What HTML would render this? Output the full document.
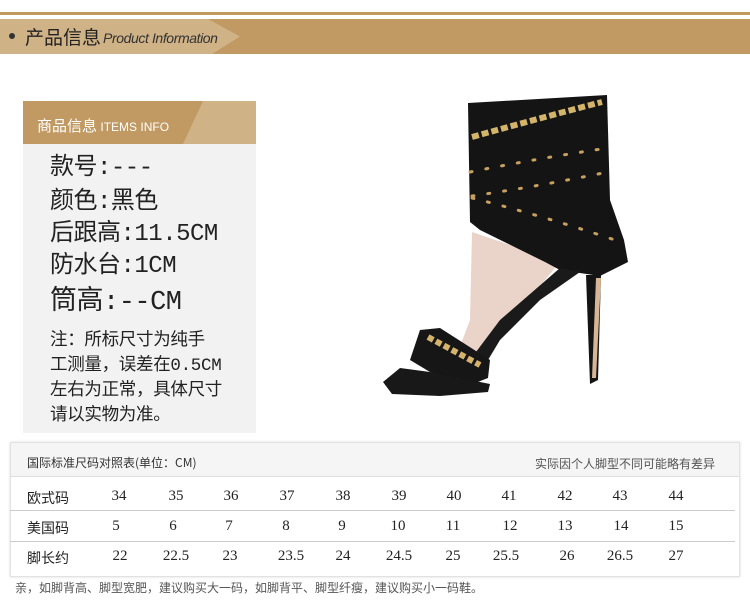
<!DOCTYPE html>
<html><head><meta charset="utf-8"><style>
*{margin:0;padding:0;box-sizing:border-box}
body{width:750px;height:604px;background:#fff;position:relative;overflow:hidden;font-family:"Liberation Sans","Noto Sans CJK SC",sans-serif;color:#222}
.a{position:absolute}
.cn{font-family:"Noto Sans CJK SC",sans-serif}
.big{font-family:"Liberation Mono","Noto Sans CJK SC",monospace;font-size:24px;color:#222;left:50px;line-height:32px;letter-spacing:-0.5px}
.row{position:absolute;left:0;width:740px;font-family:'Liberation Serif','Noto Sans CJK SC',serif;font-size:15px;color:#222}
.row span{position:absolute;width:50px;margin-left:-25px;text-align:center}
.row .l{left:27px;margin-left:0;text-align:left;font-family:"Noto Sans CJK SC",sans-serif;font-size:14px}
</style></head><body>
<div class="a" style="left:0;top:12px;width:750px;height:3px;background:#c09a5f"></div>
<div class="a" style="left:0;top:19px;width:750px;height:35px;background:#c09a62"></div>
<svg class="a" style="left:0;top:19px" width="250" height="35"><polygon points="0,0 208,0 240,17.5 212,35 0,35" fill="#cfb286"/></svg>
<div class="a" style="left:9px;top:33px;width:6px;height:6px;border-radius:3px;background:#333"></div>
<div class="a cn" style="left:25px;top:24px;font-size:19px;line-height:26px;color:#222">产品信息</div>
<div class="a" style="left:103px;top:30px;font-size:14px;font-style:italic;color:#333;letter-spacing:-0.4px">Product Information</div>

<div class="a" style="left:23px;top:101px;width:233px;height:332px;background:#f2f2f2"></div>
<div class="a" style="left:23px;top:101px;width:233px;height:43px;background:#c09a62"></div>
<svg class="a" style="left:23px;top:101px" width="233" height="43"><polygon points="180,0 233,0 233,43 160,43" fill="#cfb286"/></svg>
<div class="a cn" style="left:37px;top:116px;font-size:15px;color:#fff;line-height:20px">商品信息 <span style="font-family:'Liberation Sans';font-size:12px">ITEMS INFO</span></div>
<div class="a big" style="top:153px">款号:---</div>
<div class="a big" style="top:187px">颜色:黑色</div>
<div class="a big" style="top:219px">后跟高:11.5CM</div>
<div class="a big" style="top:251px">防水台:1CM</div>
<div class="a big" style="top:287px;font-size:27px">筒高:--CM</div>
<div class="a" style="left:50px;top:329px;font-family:'Liberation Mono','Noto Sans CJK SC',monospace;font-size:17.5px;line-height:25px;width:205px;color:#222;letter-spacing:-0.3px">注：所标尺寸为纯手<br>工测量，误差在0.5CM<br>左右为正常，具体尺寸<br>请以实物为准。</div>

<svg class="a" style="left:0;top:0" width="750" height="440">
<path d="M472,232 L560,262 L545,280 L500,330 L478,362 L452,368 L470,320 Z" fill="#ead3c8"/>
<path d="M468,103 L607,95 L610,200 L624,240 L628,262 L600,276 L560,270 L545,262 L480,230 L470,222 Z" fill="#141414"/>
<path d="M586,275 L601,275 L598,380 L590,384 Z" fill="#141414"/>
<path d="M596,278 L601,278 L596,378 L592,378 Z" fill="#d8b594"/>
<path d="M560,268 L580,272 L540,300 L500,340 L488,360 L478,366 L470,360 L500,320 Z" fill="#1a1a1a"/>
<path d="M420,330 L440,328 L490,360 L488,378 L470,385 L430,372 L410,360 Z" fill="#161616"/>
<path d="M383,382 L400,368 L430,372 L470,380 L490,384 L488,392 L440,396 L392,394 Z" fill="#181818"/>
<path d="M472,137 Q540,118 602,102" stroke="#d4b46a" stroke-width="6" fill="none" stroke-dasharray="7 3"/>
<path d="M428,337 L480,365" stroke="#d4b46a" stroke-width="6" fill="none" stroke-dasharray="6 3"/>
<path d="M470,172 Q540,158 608,148 M472,196 Q540,186 608,172 M472,198 Q540,215 615,240" stroke="#c8a060" stroke-width="3" fill="none" stroke-dasharray="2 14" stroke-linecap="round"/>
</svg>

<div class="a" style="left:10px;top:442px;width:730px;height:135px;border:1px solid #e2e2e2;box-shadow:0 0 3px #ddd;background:#fff"></div>
<div class="a" style="left:11px;top:443px;width:728px;height:34px;background:#f5f5f5;border-bottom:1px solid #ddd"></div>
<div class="a cn" style="left:27px;top:454px;font-size:12px;color:#333">国际标准尺码对照表(单位：CM)</div>
<div class="a cn" style="left:535px;top:455px;font-size:12px;color:#555">实际因个人脚型不同可能略有差异</div>
<div class="a" style="left:10px;top:510px;width:725px;height:1px;background:#ccc"></div>
<div class="a" style="left:10px;top:541px;width:725px;height:1px;background:#ccc"></div>
<div class="row" style="top:488px"><span class="l">欧式码</span><span style="left:119px">34</span><span style="left:176px">35</span><span style="left:231px">36</span><span style="left:287px">37</span><span style="left:343px">38</span><span style="left:399px">39</span><span style="left:454px">40</span><span style="left:509px">41</span><span style="left:565px">42</span><span style="left:620px">43</span><span style="left:676px">44</span></div>
<div class="row" style="top:518px"><span class="l">美国码</span><span style="left:116px">5</span><span style="left:173px">6</span><span style="left:229px">7</span><span style="left:286px">8</span><span style="left:342px">9</span><span style="left:398px">10</span><span style="left:453px">11</span><span style="left:510px">12</span><span style="left:565px">13</span><span style="left:621px">14</span><span style="left:676px">15</span></div>
<div class="row" style="top:548px"><span class="l">脚长约</span><span style="left:120px">22</span><span style="left:176px">22.5</span><span style="left:230px">23</span><span style="left:291px">23.5</span><span style="left:343px">24</span><span style="left:399px">24.5</span><span style="left:453px">25</span><span style="left:506px">25.5</span><span style="left:567px">26</span><span style="left:620px">26.5</span><span style="left:676px">27</span></div>
<div class="a cn" style="left:15px;top:579px;font-size:12px;color:#555">亲，如脚背高、脚型宽肥，建议购买大一码，如脚背平、脚型纤瘦，建议购买小一码鞋。</div>
</body></html>
